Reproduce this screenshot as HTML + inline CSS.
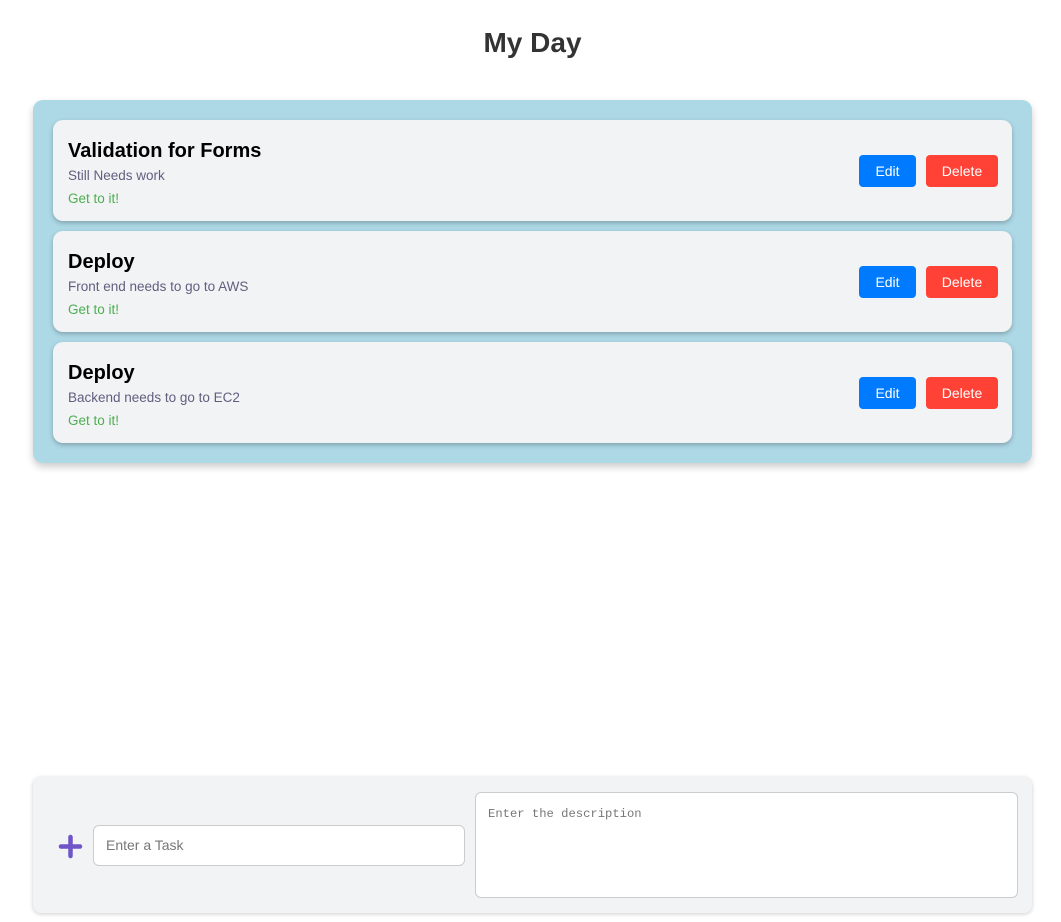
<!DOCTYPE html>
<html><head><style>
body{margin:0;background:#fff;font-family:"Liberation Sans",sans-serif;width:1061px;height:922px;position:relative;overflow:hidden}
h1{position:absolute;top:27px;left:2px;width:100%;text-align:center;margin:0;font-size:28px;color:#333;font-weight:bold}
.box{position:absolute;left:33px;top:100px;width:999px;height:363px;background:#add8e6;border-radius:10px;box-shadow:0 4px 8px rgba(0,0,0,.2)}
.card{position:absolute;left:20px;width:959px;height:101px;background:#f2f3f5;border-radius:10px;box-shadow:0 2px 5px rgba(0,0,0,.25)}
.t{position:absolute;left:15px;top:20px;font-size:20px;font-weight:bold;color:#000}
.d{position:absolute;left:15px;top:48px;font-size:13.5px;color:#5f5f7f}
.g{position:absolute;left:15px;top:71px;font-size:13.5px;color:#4caf50}
.b{position:absolute;top:35px;height:32px;border-radius:4px;color:#fff;font-size:14px;text-align:center;line-height:32px}
.e{left:806px;width:57px;background:#007bff}
.x{left:873px;width:72px;background:#ff4136}
.panel{position:absolute;left:33px;top:777px;width:999px;height:136px;background:#f2f3f5;border-radius:8px;box-shadow:0 1px 4px rgba(0,0,0,.2)}
.in{position:absolute;left:60px;top:48px;background:#fff;border:1px solid #ccc;border-radius:6px;font-size:14px;color:#777;line-height:39px;padding-left:12px;box-sizing:border-box;width:372px;height:41px}
.ta{position:absolute;left:442px;top:15px;width:543px;height:106px;background:#fff;border:1px solid #ccc;border-radius:6px;box-sizing:border-box;font-family:"Liberation Mono",monospace;font-size:12.2px;color:#777;padding:14px 12px}
</style></head><body>
<h1>My Day</h1>
<div class="box">
<div class="card" style="top:20px"><div class="t">Validation for Forms</div><div class="d">Still Needs work</div><div class="g">Get to it!</div><div class="b e">Edit</div><div class="b x">Delete</div></div>
<div class="card" style="top:131px"><div class="t">Deploy</div><div class="d">Front end needs to go to AWS</div><div class="g">Get to it!</div><div class="b e">Edit</div><div class="b x">Delete</div></div>
<div class="card" style="top:242px"><div class="t">Deploy</div><div class="d">Backend needs to go to EC2</div><div class="g">Get to it!</div><div class="b e">Edit</div><div class="b x">Delete</div></div>
</div>
<div class="panel">
<svg style="position:absolute;left:25px;top:57px" width="25" height="25" viewBox="0 0 25 25"><path d="M12.5 3V22M3 12.5H22" stroke="#6f55c8" stroke-width="4.5" stroke-linecap="round"/></svg>
<div class="in">Enter a Task</div>
<div class="ta">Enter the description</div>
</div>
</body></html>
